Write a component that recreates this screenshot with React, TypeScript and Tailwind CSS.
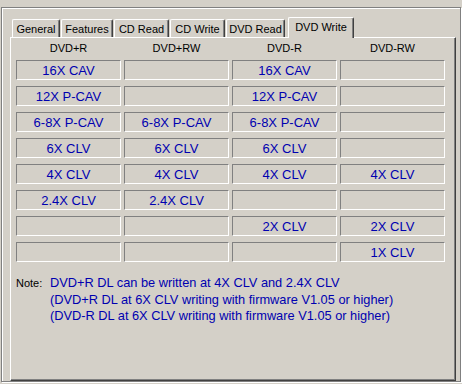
import React from "react";

const tabs = ["General", "Features", "CD Read", "CD Write", "DVD Read"];
const tabWidths = ["w-[48px]", "w-[52px]", "w-[55px]", "w-[55px]", "w-[59px]"];

const headers = ["DVD+R", "DVD+RW", "DVD-R", "DVD-RW"];

const rows: string[][] = [
  ["16X CAV", "", "16X CAV", ""],
  ["12X P-CAV", "", "12X P-CAV", ""],
  ["6-8X P-CAV", "6-8X P-CAV", "6-8X P-CAV", ""],
  ["6X CLV", "6X CLV", "6X CLV", ""],
  ["4X CLV", "4X CLV", "4X CLV", "4X CLV"],
  ["2.4X CLV", "2.4X CLV", "", ""],
  ["", "", "2X CLV", "2X CLV"],
  ["", "", "", "1X CLV"],
];

const notes = [
  "DVD+R DL can be written at 4X CLV and 2.4X CLV",
  "(DVD+R DL at 6X CLV writing with firmware V1.05 or higher)",
  "(DVD-R DL at 6X CLV writing with firmware V1.05 or higher)",
];

function Tab({ label, width }: { label: string; width: string }) {
  return (
    <div
      className={`${width} h-[18px] mr-px flex items-center justify-center pt-[1px] rounded-t-[2px] border-l border-t border-r border-l-white border-t-white border-r-[#404040] shadow-[inset_-1px_0_0_#808080] text-[11px] leading-[13px] text-black`}
    >
      {label}
    </div>
  );
}

export default function App() {
  return (
    <div
      className="w-[462px] h-[384px] bg-[#d4d0c8] pt-[7px] pl-px overflow-hidden"
      style={{ fontFamily: '"Liberation Sans", Arial, sans-serif' }}
    >
      <div className="w-[460px] h-[375px] border border-[#808080] shadow-[inset_1px_1px_0_#fff,1px_1px_0_#fff] pt-[9px] pl-[8px]">
        {/* tab strip */}
        <div className="flex items-end h-[20px] pl-[2px]">
          {tabs.map((t, i) => (
            <Tab key={t} label={t} width={tabWidths[i]} />
          ))}
          <div className="relative z-10 ml-[2px] -mb-px w-[66px] h-[21px] flex items-start justify-center pt-[3px] rounded-t-[2px] bg-[#d4d0c8] border-l border-t border-r border-l-white border-t-white border-r-[#404040] shadow-[inset_-1px_0_0_#808080] text-[11px] leading-[13px] text-black">
            DVD Write
          </div>
        </div>

        {/* panel */}
        <div className="w-[446px] h-[344px] border border-l-white border-t-white border-r-[#404040] border-b-[#404040] shadow-[inset_-1px_-1px_0_#808080] pt-[4px] pl-[5px]">
          <div className="grid grid-cols-[repeat(4,105px)] gap-x-[3px] h-[13px]">
            {headers.map((h) => (
              <div key={h} className="text-center text-[11px] leading-[13px] text-black">
                {h}
              </div>
            ))}
          </div>

          <div className="mt-[5px] grid grid-cols-[repeat(4,105px)] gap-x-[3px] gap-y-[6px]">
            {rows.flatMap((r, ri) =>
              r.map((c, ci) => (
                <div
                  key={`${ri}-${ci}`}
                  className="h-[20px] flex items-center justify-center border border-l-[#808080] border-t-[#808080] border-r-white border-b-white text-[13px] leading-[15px] text-[#0000b0]"
                >
                  {c}
                </div>
              ))
            )}
          </div>

          <div className="mt-[13px] flex">
            <div className="w-[34px] text-[11px] leading-[16.5px] text-black">Note:</div>
            <div className="text-[12.8px] leading-[16.5px] text-[#0000b0]">
              {notes.map((n) => (
                <div key={n}>{n}</div>
              ))}
            </div>
          </div>
        </div>
      </div>
    </div>
  );
}
